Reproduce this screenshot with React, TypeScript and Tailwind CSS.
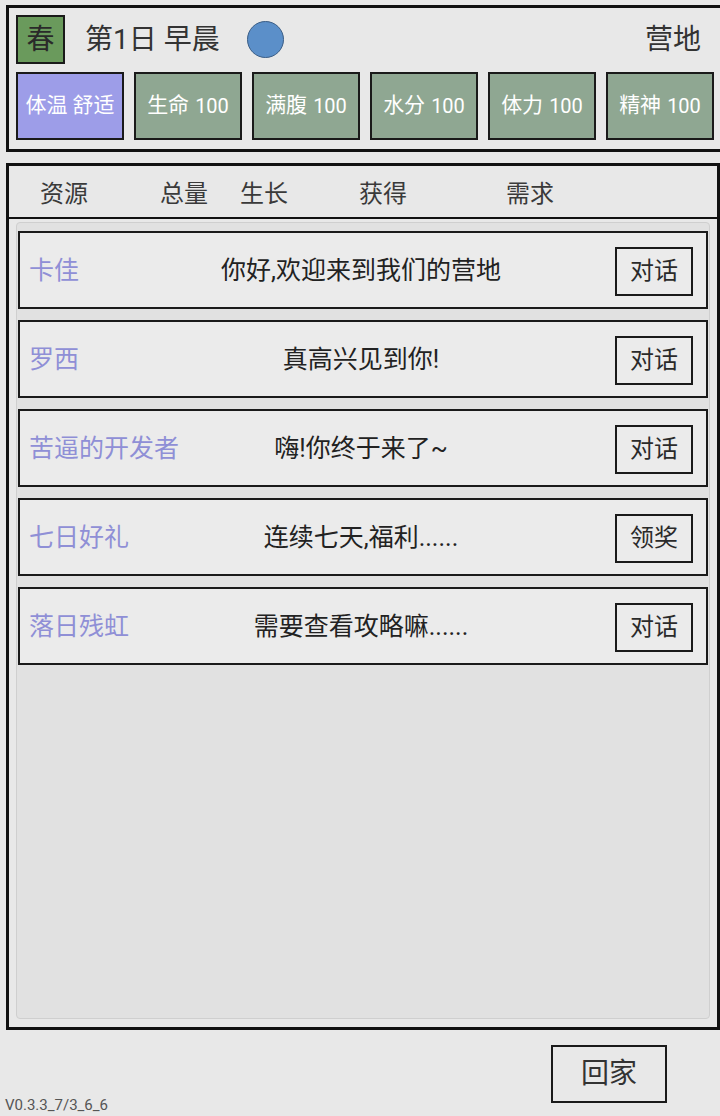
const font = { fontFamily: 'Roboto, "Noto Sans CJK SC", sans-serif' };

const stats = [
  { label: '体温', value: '舒适', warm: true },
  { label: '生命', value: '100' },
  { label: '满腹', value: '100' },
  { label: '水分', value: '100' },
  { label: '体力', value: '100' },
  { label: '精神', value: '100' },
];

const npcs = [
  { name: '卡佳', text: '你好,欢迎来到我们的营地', action: '对话' },
  { name: '罗西', text: '真高兴见到你!', action: '对话' },
  { name: '苦逼的开发者', text: '嗨!你终于来了~', action: '对话' },
  { name: '七日好礼', text: '连续七天,福利......', action: '领奖' },
  { name: '落日残虹', text: '需要查看攻略嘛......', action: '对话' },
];

function StatBox({ label, value, warm }: { label: string; value: string; warm?: boolean }) {
  return (
    <div
      className={`flex h-[68px] w-[108px] items-center justify-center border-2 border-[#1a1a1a] text-[21px] text-white ${
        warm ? 'bg-[#9d9de8]' : 'bg-[#8fa792]'
      }`}
    >
      <span>{label}</span>
      <span className={warm ? 'ml-[5px] text-[21px]' : 'ml-[6px] text-[20px]'}>{value}</span>
    </div>
  );
}

function NpcRow({ name, text, action }: { name: string; text: string; action: string }) {
  return (
    <div className="grid h-[78px] grid-cols-[1fr_auto_1fr] items-center border-2 border-[#1a1a1a] bg-[#ebebeb] pl-[9px] pr-[13px] pt-[2px]">
      <div className="text-[25px] text-[#8f8fd6]">{name}</div>
      <div className="text-center text-[25px] text-[#222]">{text}</div>
      <div className="flex justify-end">
        <button className="flex h-[49px] w-[78px] items-center justify-center border-2 border-[#1a1a1a] bg-[#ebebeb] text-[24px] text-[#2a2a2a]">
          {action}
        </button>
      </div>
    </div>
  );
}

export default function App() {
  return (
    <div className="flex h-[1116px] w-[720px] flex-col overflow-hidden bg-[#e8e8e8]" style={font}>
      {/* 顶部状态 */}
      <div className="ml-[6px] mt-[5px] flex h-[147px] flex-col border-[3px] border-r-0 border-[#111] pl-[7px] pr-[5px] pt-[7px]">
        <div className="flex h-[49px] items-center">
          <div className="flex h-[49px] w-[49px] items-center justify-center border-2 border-[#1a1a1a] bg-[#6a9a5c] text-[28px] text-[#2a2a2a]">
            春
          </div>
          <div className="ml-[20px] text-[28px] text-[#333]">第1日 早晨</div>
          <div className="ml-[27px] h-[37px] w-[37px] rounded-full border border-[#3a5d85] bg-[#5b8fc9]" />
          <div className="ml-auto mr-[14px] text-[28px] text-[#333]">营地</div>
        </div>
        <div className="mt-[8px] flex gap-[10px]">
          {stats.map((s) => (
            <StatBox key={s.label} {...s} />
          ))}
        </div>
      </div>

      {/* 资源面板 */}
      <div className="ml-[6px] mt-[11px] flex h-[867px] flex-col border-[3px] border-[#111]">
        <div className="flex h-[53px] shrink-0 items-center border-b-2 border-[#111] pt-[5px] text-[24px] text-[#3a3a3a]">
          <span className="ml-[31px]">资源</span>
          <span className="ml-[72px]">总量</span>
          <span className="ml-[32px]">生长</span>
          <span className="ml-[71px]">获得</span>
          <span className="ml-[99px]">需求</span>
        </div>
        <div className="mx-[7px] mb-[8px] mt-[3px] flex flex-1 flex-col gap-[11px] rounded-[4px] border border-[#cfcfcf] bg-[#e1e1e1] px-[1px] pt-[8px]">
          {npcs.map((n) => (
            <NpcRow key={n.name} {...n} />
          ))}
        </div>
      </div>

      {/* 底部 */}
      <div className="relative flex-1">
        <button className="absolute left-[551px] top-[15px] flex h-[58px] w-[116px] items-center justify-center border-2 border-[#1a1a1a] bg-[#e8e8e8] text-[28px] text-[#333]">
          回家
        </button>
        <div className="absolute bottom-[0px] left-[5px] text-[15px] text-[#555]">V0.3.3_7/3_6_6</div>
      </div>
    </div>
  );
}
